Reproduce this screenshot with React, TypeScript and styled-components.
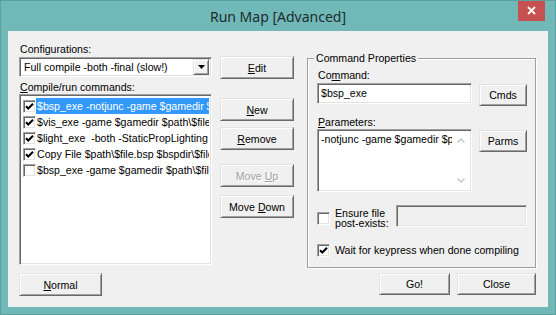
import styled, { createGlobalStyle } from 'styled-components';

const GlobalStyle = createGlobalStyle`
  html, body {
    margin: 0;
    padding: 0;
    background: #71b9b9;
  }
  body {
    font-family: "Liberation Sans", Arial, sans-serif;
    font-size: 10.6px;
    color: #000;
  }
`;

const Window = styled.div`
  width: 556px;
  height: 315px;
  box-sizing: border-box;
  background: #71b9b9;
  border: 1px solid #5c9f9f;
  display: flex;
  flex-direction: column;
  overflow: hidden;
`;

const TitleBar = styled.div`
  height: 30px;
  flex: none;
  display: grid;
  grid-template-columns: 1fr auto 1fr;
  align-items: center;
`;

const Title = styled.div`
  grid-column: 2;
  font-family: "Noto Sans", "Open Sans", sans-serif;
  font-size: 14px;
  color: #1c2c2c;
  padding-top: 1px;
`;

const CloseButton = styled.div`
  grid-column: 3;
  justify-self: end;
  align-self: start;
  margin: -1px 10px 0 0;
  width: 27px;
  height: 21px;
  background: #c75050;
  display: flex;
  align-items: center;
  justify-content: center;
`;

const Client = styled.div`
  flex: 1;
  margin: 0 7px 7px;
  background: #f0f0f0;
  display: flex;
  align-items: flex-start;
  padding-left: 11px;
`;

const Column = styled.div<{ $width: number; $left?: number }>`
  width: ${p => p.$width}px;
  margin-left: ${p => p.$left ?? 0}px;
  display: flex;
  flex-direction: column;
`;

const Label = styled.div<{ $top: number }>`
  height: 13px;
  line-height: 13px;
  margin-top: ${p => p.$top}px;
  padding-left: 1px;
  white-space: nowrap;
`;

const sunken = `
  box-sizing: border-box;
  border: 1px solid;
  border-color: #a0a0a0 #fff #fff #a0a0a0;
  box-shadow: inset 1px 1px 0 #696969, inset -1px -1px 0 #e3e3e3;
`;

const raised = `
  box-sizing: border-box;
  border: 1px solid;
  border-color: #e3e3e3 #696969 #696969 #e3e3e3;
  box-shadow: inset 1px 1px 0 #fff, inset -1px -1px 0 #a0a0a0;
  background: #f0f0f0;
`;

const Combo = styled.div`
  ${sunken}
  margin-top: 1px;
  height: 20px;
  background: #fff;
  display: flex;
  align-items: center;
  padding: 2px 2px 2px 4px;
`;

const ComboText = styled.span`
  flex: 1;
  white-space: nowrap;
  overflow: hidden;
`;

const DropButton = styled.span`
  ${raised}
  width: 16px;
  height: 16px;
  flex: none;
  display: flex;
  align-items: center;
  justify-content: center;
`;

const List = styled.div`
  ${sunken}
  height: 171px;
  background: #fff;
  padding: 3px 2px 0 3px;
  overflow: hidden;
`;

const Row = styled.div`
  height: 16px;
  display: flex;
  align-items: center;
`;

const RowText = styled.span<{ $selected?: boolean }>`
  flex: 1;
  min-width: 0;
  height: 16px;
  line-height: 16px;
  padding-left: 1px;
  white-space: pre;
  overflow: hidden;
  background: ${p => (p.$selected ? '#3399ff' : 'transparent')};
  color: ${p => (p.$selected ? '#fff' : '#000')};
`;

const Box = styled.span`
  ${sunken}
  width: 13px;
  height: 13px;
  flex: none;
  background: #fff;
  display: flex;
  align-items: center;
  justify-content: center;
`;

const Button = styled.div<{ $w?: number; $h?: number; $top?: number; $disabled?: boolean }>`
  ${raised}
  width: ${p => (p.$w ? `${p.$w}px` : '100%')};
  height: ${p => p.$h ?? 23}px;
  margin-top: ${p => p.$top ?? 0}px;
  flex: none;
  display: flex;
  align-items: center;
  justify-content: center;
  white-space: nowrap;
  color: ${p => (p.$disabled ? '#a0a0a0' : '#000')};
  text-shadow: ${p => (p.$disabled ? '1px 1px 0 #fff' : 'none')};
`;

const Group = styled.div`
  margin-top: 27px;
  border: 1px solid #a0a0a0;
  box-shadow: inset 1px 1px 0 #fff, 1px 1px 0 #fff;
  padding: 0 8px 10px 9px;
  display: flex;
  flex-direction: column;
`;

const Legend = styled.div`
  align-self: flex-start;
  margin: -7px 0 0 -3px;
  padding: 0 2px;
  height: 13px;
  line-height: 13px;
  background: #f0f0f0;
`;

const FieldRow = styled.div<{ $top?: number }>`
  display: flex;
  align-items: flex-start;
  gap: 7px;
  margin-top: ${p => p.$top ?? 0}px;
`;

const TextField = styled.div<{ $w: number; $h: number; $disabled?: boolean }>`
  ${sunken}
  width: ${p => p.$w}px;
  height: ${p => p.$h}px;
  flex: none;
  background: ${p => (p.$disabled ? '#f0f0f0' : '#fff')};
  padding: 0 2px 0 3px;
  line-height: ${p => p.$h - 2}px;
  white-space: nowrap;
  overflow: hidden;
`;

const ParamBox = styled.div`
  ${sunken}
  width: 155px;
  height: 63px;
  flex: none;
  background: #fff;
  display: flex;
  padding: 2px;
`;

const ParamText = styled.div`
  flex: 1;
  min-width: 0;
  white-space: nowrap;
  overflow: hidden;
  padding: 1px 0 0 1px;
  line-height: 13px;
`;

const ScrollBar = styled.div`
  width: 17px;
  flex: none;
  display: flex;
  flex-direction: column;
  justify-content: space-between;
`;

const ScrollArrow = styled.div`
  height: 17px;
  display: flex;
  align-items: center;
  justify-content: center;
`;

const CheckRow = styled.div<{ $top: number; $h: number }>`
  display: flex;
  align-items: center;
  height: ${p => p.$h}px;
  margin-top: ${p => p.$top}px;
`;

const CheckLabel = styled.label<{ $shift?: number }>`
  display: flex;
  align-items: center;
  gap: 5px;
  margin-top: ${p => p.$shift ?? 0}px;
`;

const CheckText = styled.span<{ $lh?: number }>`
  line-height: ${p => p.$lh ?? 13}px;
  white-space: nowrap;
`;

const Footer = styled.div`
  display: flex;
  justify-content: flex-end;
  gap: 7px;
  margin-top: 5px;
`;

const Tick = () => (
  <svg width="9" height="9" viewBox="0 0 9 9">
    <path d="M1 4.2 L3.3 6.6 L8 1.8" fill="none" stroke="#000" strokeWidth="2.1" />
  </svg>
);

const Check = ({ checked }: { checked?: boolean }) => <Box>{checked && <Tick />}</Box>;

const commands = [
  { text: '$bsp_exe -notjunc -game $gamedir $path\\$file', checked: true, selected: true },
  { text: '$vis_exe -game $gamedir $path\\$file', checked: true },
  { text: '$light_exe  -both -StaticPropLighting -StaticPropPolys -game $gamedir', checked: true },
  { text: 'Copy File $path\\$file.bsp $bspdir\\$file.bsp', checked: true },
  { text: '$bsp_exe -game $gamedir $path\\$file', checked: false },
];

function App() {
  return (
    <>
      <GlobalStyle />
      <Window>
        <TitleBar>
          <Title>Run Map [Advanced]</Title>
          <CloseButton>
            <svg width="9" height="9" viewBox="0 0 9 9">
              <path d="M1 1 L8 8 M8 1 L1 8" stroke="#fff" strokeWidth="1.8" />
            </svg>
          </CloseButton>
        </TitleBar>
        <Client>
          <Column $width={193}>
            <Label $top={12}>Configurations:</Label>
            <Combo>
              <ComboText>Full compile -both -final (slow!)</ComboText>
              <DropButton>
                <svg width="7" height="4" viewBox="0 0 7 4">
                  <path d="M0 0 H7 L3.5 4 Z" fill="#000" />
                </svg>
              </DropButton>
            </Combo>
            <Label $top={4}>
              <u>C</u>ompile/run commands:
            </Label>
            <List>
              {commands.map(c => (
                <Row key={c.text}>
                  <Check checked={c.checked} />
                  <RowText $selected={c.selected}>{c.text}</RowText>
                </Row>
              ))}
            </List>
            <Button $w={83} $top={8}>
              <u>N</u>ormal
            </Button>
          </Column>

          <Column $width={74} $left={8}>
            <Button $top={25}>
              <u>E</u>dit
            </Button>
            <Button $top={19}>
              <u>N</u>ew
            </Button>
            <Button $top={6}>
              <u>R</u>emove
            </Button>
            <Button $top={14} $disabled>
              Move&nbsp;<u>U</u>p
            </Button>
            <Button $top={8}>
              Move&nbsp;<u>D</u>own
            </Button>
          </Column>

          <Column $width={229} $left={13}>
            <Group>
              <Legend>Command Properties</Legend>
              <Label $top={4}>
                Co<u>m</u>mand:
              </Label>
              <FieldRow $top={1}>
                <TextField $w={155} $h={21}>$bsp_exe</TextField>
                <Button $w={48} $h={22} $top={1}>
                  Cmds
                </Button>
              </FieldRow>
              <Label $top={10}>
                <u>P</u>arameters:
              </Label>
              <FieldRow>
                <ParamBox>
                  <ParamText>-notjunc -game $gamedir $path\$file</ParamText>
                  <ScrollBar>
                    <ScrollArrow>
                      <svg width="8" height="5" viewBox="0 0 8 5">
                        <path d="M0.5 4.5 L4 1 L7.5 4.5" fill="none" stroke="#c3c3c3" strokeWidth="1.3" />
                      </svg>
                    </ScrollArrow>
                    <ScrollArrow>
                      <svg width="8" height="5" viewBox="0 0 8 5">
                        <path d="M0.5 0.5 L4 4 L7.5 0.5" fill="none" stroke="#c3c3c3" strokeWidth="1.3" />
                      </svg>
                    </ScrollArrow>
                  </ScrollBar>
                </ParamBox>
                <Button $w={48} $h={22} $top={1}>
                  Parms
                </Button>
              </FieldRow>
              <CheckRow $top={13} $h={22}>
                <CheckLabel $shift={4}>
                  <Check />
                  <CheckText $lh={10}>
                    Ensure file
                    <br />
                    post-exists:
                  </CheckText>
                </CheckLabel>
                <TextField $w={131} $h={22} $disabled style={{ marginLeft: 'auto' }} />
              </CheckRow>
              <CheckRow $top={17} $h={13}>
                <CheckLabel>
                  <Check checked />
                  <CheckText>Wait for keypress when done compiling</CheckText>
                </CheckLabel>
              </CheckRow>
            </Group>
            <Footer>
              <Button $w={71} $h={22}>
                Go!
              </Button>
              <Button $w={79} $h={22}>
                Close
              </Button>
            </Footer>
          </Column>
        </Client>
      </Window>
    </>
  );
}

export default App;
